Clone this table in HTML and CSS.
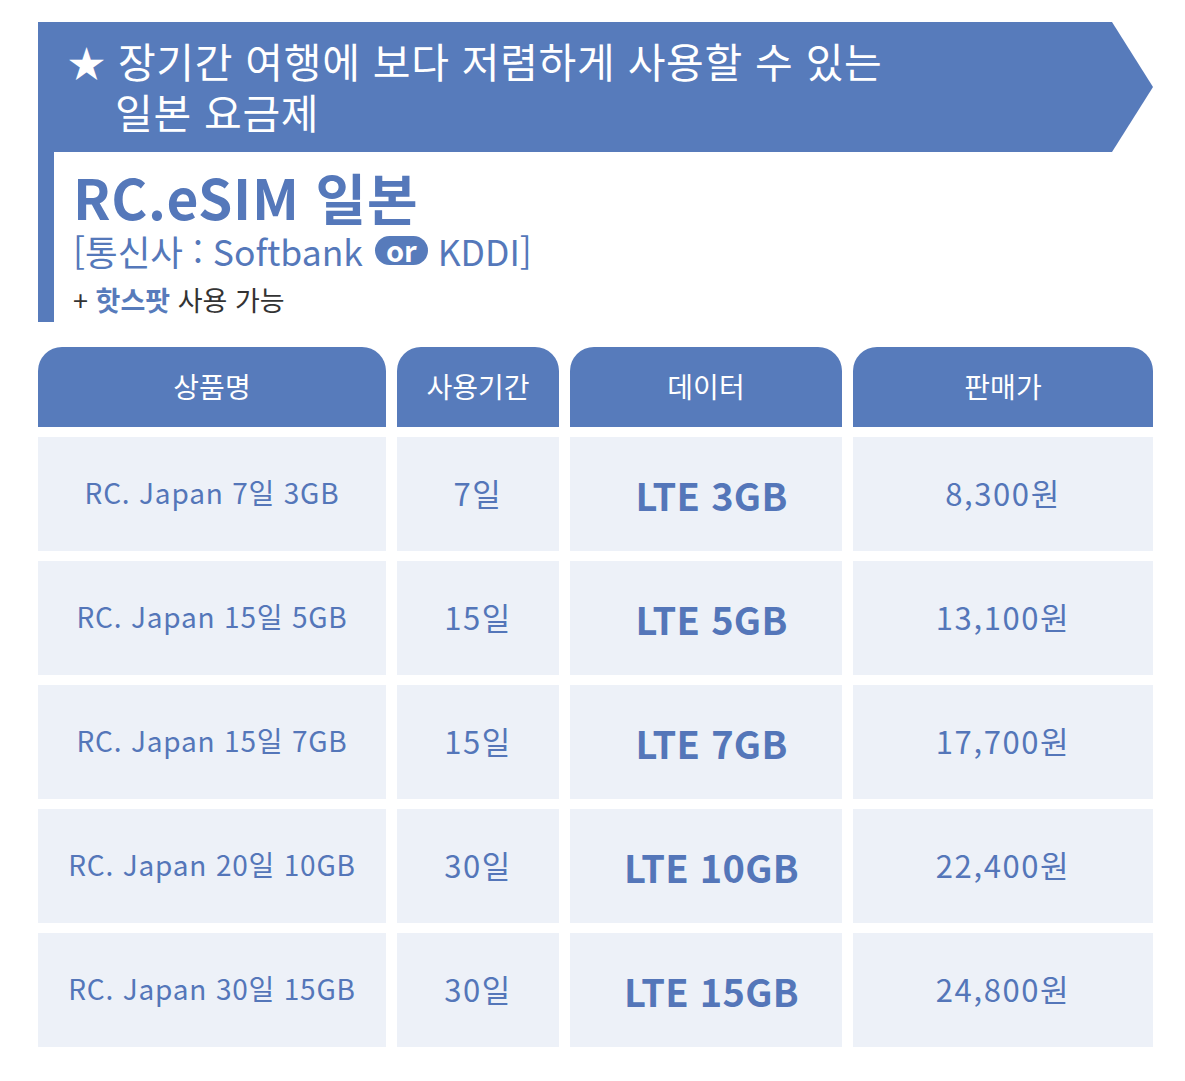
FILE: index.html
```html
<!DOCTYPE html>
<html lang="ko">
<head>
<meta charset="utf-8">
<link rel="stylesheet" href="styles.css">
</head>
<body>
<div class="page">
  <div class="banner">
    <p class="banner-text"><span class="star">★</span> 장기간 여행에 보다 저렴하게 사용할 수 있는<br>일본 요금제</p>
  </div>
  <div class="intro">
    <h1 class="title">RC.eSIM 일본</h1>
    <p class="carrier">[통신사 : Softbank <span class="or">or</span> KDDI]</p>
    <p class="hotspot">+ <strong>핫스팟</strong> 사용 가능</p>
  </div>
  <div class="table">
    <div class="th">상품명</div>
    <div class="th">사용기간</div>
    <div class="th">데이터</div>
    <div class="th">판매가</div>

    <div class="td">RC. Japan 7일 3GB</div>
    <div class="td num">7일</div>
    <div class="td data">LTE 3GB</div>
    <div class="td num">8,300원</div>

    <div class="td">RC. Japan 15일 5GB</div>
    <div class="td num">15일</div>
    <div class="td data">LTE 5GB</div>
    <div class="td num">13,100원</div>

    <div class="td">RC. Japan 15일 7GB</div>
    <div class="td num">15일</div>
    <div class="td data">LTE 7GB</div>
    <div class="td num">17,700원</div>

    <div class="td">RC. Japan 20일 10GB</div>
    <div class="td num">30일</div>
    <div class="td data">LTE 10GB</div>
    <div class="td num">22,400원</div>

    <div class="td">RC. Japan 30일 15GB</div>
    <div class="td num">30일</div>
    <div class="td data">LTE 15GB</div>
    <div class="td num">24,800원</div>
  </div>
</div>
</body>
</html>
```
FILE: styles.css
```css
* { box-sizing: border-box; }
html, body { margin: 0; padding: 0; background: #ffffff; }
body {
  font-family: "Noto Sans CJK KR", "Noto Sans", sans-serif;
  color: #5578ba;
}
.page {
  padding: 22px 32px 0 38px;
  width: 1185px;
}
.banner {
  width: 1115px;
  height: 130px;
  background: #577bbb;
  clip-path: polygon(0 0, 1074px 0, 1115px 65px, 1074px 130px, 0 130px);
  padding: 14px 0 0 30px;
}
.banner-text {
  margin: 0;
  color: #ffffff;
  font-size: 41px;
  line-height: 49px;
  padding-left: 47px;
  text-indent: -47px;
  letter-spacing: 0.7px;
}
.star { font-size: 37px; }
.intro {
  border-left: 16px solid #577bbb;
  padding: 14px 0 0 19px;
  height: 170px;
}
.title {
  margin: 0;
  font-size: 55px;
  line-height: 60px;
  font-weight: 700;
  color: #5578ba;
  letter-spacing: 0.7px;
}
.carrier {
  margin: 0;
  font-size: 35.5px;
  line-height: 50px;
  color: #5578ba;
  letter-spacing: 0;
}
.or {
  display: inline-block;
  background: #577bbb;
  color: #fff;
  font-weight: 700;
  font-size: 29px;
  line-height: 27px;
  height: 29px;
  padding: 0 11px;
  border-radius: 15px;
  vertical-align: 4px;
  letter-spacing: 0;
  margin-left: 2px;
}
.hotspot {
  margin: 7px 0 0;
  font-size: 27px;
  line-height: 34px;
  color: #333;
}
.hotspot strong { color: #577bbb; font-weight: 700; }
.table {
  margin-top: 25px;
  display: grid;
  grid-template-columns: 348px 162px 272px 300px;
  grid-template-rows: 80px repeat(5, 114px);
  column-gap: 11px;
  row-gap: 10px;
}
.th {
  background: #577bbb;
  color: #fff;
  border-radius: 24px 24px 0 0;
  display: flex;
  align-items: center;
  justify-content: center;
  font-size: 28px;
  padding-bottom: 2px;
}
.td {
  background: #edf1f8;
  display: flex;
  align-items: center;
  justify-content: center;
  font-size: 28px;
  letter-spacing: 0.8px;
  color: #5476b9;
  padding-bottom: 4px;
}
.td.num {
  font-size: 31px;
  letter-spacing: 1.6px;
}
.td.data {
  font-size: 38px;
  font-weight: 700;
  letter-spacing: 0.3px;
  padding: 0 0 0 11px;
}
```
